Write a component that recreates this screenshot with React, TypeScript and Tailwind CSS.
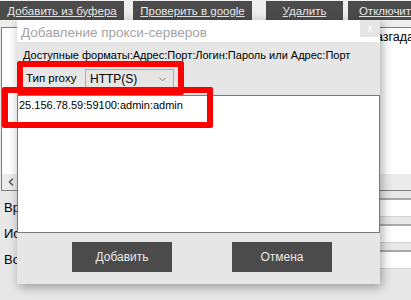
import { ChevronDown, ChevronLeft } from 'lucide-react';

const font = "font-['Liberation_Sans',Arial,sans-serif]";

function TopButton({ label, width, ml }: { label: string; width: string; ml: string }) {
  return (
    <button
      className={`${width} ${ml} h-[19px] shrink-0 bg-[#4b4b4b] text-[#e8e8e8] text-[11.5px] leading-[18px] underline underline-offset-[1px] whitespace-nowrap overflow-hidden`}
    >
      {label}
    </button>
  );
}

function FormRow({ label }: { label: string }) {
  return (
    <div className="h-[26px] flex items-end">
      <span className="w-[200px] pl-[4px] text-[13px] leading-[16px] text-black pb-[1px]">{label}</span>
      <div className="flex-1 h-[19px] bg-white border-t-2 border-t-[#a8a8a8] border-b border-b-[#d4d4d4]" />
    </div>
  );
}

export default function App() {
  return (
    <div className={`${font} relative w-[411px] h-[300px] overflow-hidden bg-[#e8e8e8]`}>
      {/* toolbar */}
      <div className="h-[27px] bg-[#eeeeee] flex items-start pt-[1px]">
        <TopButton label="Добавить из буфера" width="w-[124px]" ml="ml-0" />
        <TopButton label="Проверить в google" width="w-[119px]" ml="ml-[9px]" />
        <TopButton label="Удалить" width="w-[77px]" ml="ml-[14px]" />
        <TopButton label="Отключить" width="w-[80px]" ml="ml-[5px]" />
      </div>

      {/* proxy list */}
      <div className="ml-[1px] h-[164px] bg-white border-t border-l border-b border-[#7d7d7d] flex flex-col">
        <div className="h-[19px] pl-[366px] text-[12.5px] leading-[19px] text-black whitespace-nowrap">Разгадать</div>
        <div className="flex-1" />
        <div className="h-[16px] bg-[#ebebeb] flex items-center pl-[3px] text-[#555]">
          <ChevronLeft size={12} strokeWidth={3} />
        </div>
      </div>

      {/* settings */}
      <div className="flex flex-col">
        <FormRow label="Время ожидания" />
        <FormRow label="Использовать" />
        <FormRow label="Возвращать" />
      </div>

      {/* dialog */}
      <div className="absolute left-[17px] top-[20px] w-[363px] flex flex-col shadow-[2px_3px_10px_rgba(0,0,0,0.35)]">
        <div className="relative h-[22px] bg-white">
          <span className="pl-[4px] text-[13.5px] leading-[22px] text-[#a3a3a3]">Добавление прокси-серверов</span>
          <div className="absolute right-0 top-0 w-[20px] h-[17px] bg-[#e6e6e6] flex items-center justify-center text-white text-[10px] leading-none">
            x
          </div>
        </div>
        <div className="bg-[#e6e6e6] flex flex-col">
          <div className="pt-[7px] pl-[6px] text-[11px] leading-[13px] text-black whitespace-nowrap">
            Доступные форматы:Адрес:Порт:Логин:Пароль или Адрес:Порт
          </div>
          <div className="mt-[7px] h-[20px] flex items-center">
            <span className="w-[68px] pl-[9px] text-[11.5px] text-black">Тип proxy</span>
            <div className="w-[89px] h-[20px] border border-[#adadad] bg-[#e5e5e5] flex items-center justify-between pl-[4px] pr-[5px]">
              <span className="text-[12px] text-black">HTTP(S)</span>
              <ChevronDown size={11} strokeWidth={1.5} className="text-[#555]" />
            </div>
          </div>
          <div className="mt-[6px] h-[138px] bg-white border border-[#7a7a7a] pl-[1px] pt-[2px] text-[11px] leading-[14px] text-black">
            25.156.78.59:59100:admin:admin
          </div>
          <div className="mt-[9px] mb-[12px] flex pl-[55px] gap-[60px]">
            <button className="w-[100px] h-[30px] bg-[#4b4b4b] text-[#e8e8e8] text-[12px]">Добавить</button>
            <button className="w-[100px] h-[30px] bg-[#4b4b4b] text-[#e8e8e8] text-[12px]">Отмена</button>
          </div>
        </div>
      </div>

      {/* annotations */}
      <div className="absolute left-[17px] top-[61px] w-[167px] h-[34px] border-[6px] border-[#ff0000] rounded-[2px]" />
      <div className="absolute left-[2px] top-[87px] w-[211px] h-[41px] border-[6px] border-[#ff0000] rounded-[2px]" />
    </div>
  );
}
